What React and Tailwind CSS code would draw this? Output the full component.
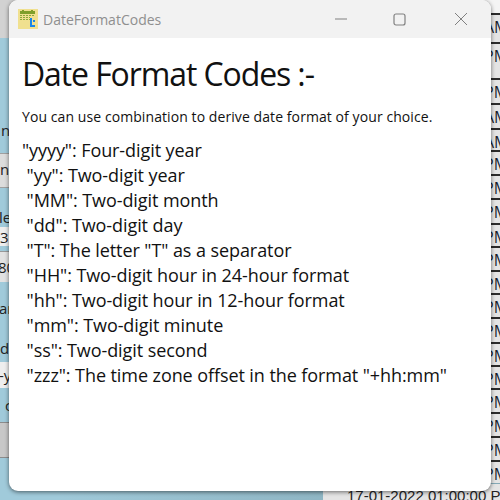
const rows = [
  ["h-[29px]", "AM"], ["h-[36px]", "PM"], ["h-[25px]", "PM"], ["h-[25px]", "AM"],
  ["h-[22px]", "AM"], ["h-[24px]", "PM"], ["h-[24px]", "PM"], ["h-[25px]", "PM"],
  ["h-[23px]", "PM"], ["h-[24px]", "PM"], ["h-[23px]", "PM"], ["h-[24px]", "PM"],
  ["h-[25px]", "PM"], ["h-[23px]", "PM"], ["h-[23px]", "PM"], ["h-[24px]", "PM"],
  ["h-[24px]", "PM"], ["h-[24px]", "PM"], ["h-[23px]", "PM"],
];
const codes = [
  '"yyyy": Four-digit year',
  ' "yy": Two-digit year',
  ' "MM": Two-digit month',
  ' "dd": Two-digit day',
  ' "T": The letter "T" as a separator',
  ' "HH": Two-digit hour in 24-hour format',
  ' "hh": Two-digit hour in 12-hour format',
  ' "mm": Two-digit minute',
  ' "ss": Two-digit second',
  ' "zzz": The time zone offset in the format "+hh:mm"',
];
export default function App() {
  return (
    <div className="relative w-[500px] h-[500px] overflow-hidden bg-gradient-to-r from-[#a3cddd] to-[#84a9b6] font-['Open_Sans',sans-serif]">
      <div className="flex h-full w-[60px] flex-col bg-[#a0cada] text-[15px] leading-[20px] text-[#222222]">
        <div className="h-[38px] bg-[#d2d2d2]" />
        <div className="flex h-[115px] items-end pb-[13px] pl-[1px]">n</div>
        <div className="flex h-[35px] items-center border-y border-[#a0a0a0] bg-[#dcdcdc]"><span className="mt-[-3px]">n1</span></div>
        <div className="flex h-[39px] items-end"><span className="ml-[-1px]">le</span></div>
        <div className="flex h-[19px] items-center bg-[#eeeeee]">31</div>
        <div className="h-[6px] border-b border-[#999999]" />
        <div className="flex h-[30px] items-center bg-[#e2e2e2]"><span className="ml-[-2px]">80</span></div>
        <div className="flex h-[80px] flex-col justify-between pb-[4px] pt-[16px]"><span className="ml-[-1px]">an</span><span>d</span></div>
        <div className="flex h-[26px] items-center bg-[#eeeeee]"><span className="ml-[-1px]">-y</span></div>
        <div className="flex h-[34px] items-center pl-[5px]">c</div>
        <div className="h-[36px] border-y border-[#8c8c8c] bg-[#c8c8c8]" />
      </div>
      <div className="absolute right-0 top-0 flex h-[13px] w-[20px] bg-[#f4f4f4]" />
      <div className="absolute right-0 top-[13px] flex w-[20px] flex-col bg-[#e4e4e4] text-[16px] leading-[24px] text-[#1a1f30]">
        {rows.map(([h, t], i) => (
          <div key={i} className={`${h} overflow-hidden border-t-2 border-[#2a2a2a] whitespace-nowrap`}>
            <span className="ml-[4px]">{t}</span>
          </div>
        ))}
      </div>
      <div className="absolute left-[323px] top-[484px] flex h-[24px] w-[177px] items-center overflow-hidden bg-[#e4e4e4] pl-[24px] font-['Liberation_Sans',sans-serif] text-[15px] whitespace-nowrap text-[#222222]">
        <div className="absolute bottom-0 left-[10px] h-[8px] w-[7px] bg-[#c4c4c4]" />
        17-01-2022 01:00:00 PM
      </div>
      <div className="absolute left-[9px] top-0 h-[491px] w-[482px] overflow-hidden rounded-[9px] bg-white shadow-[0_1px_4px_rgba(0,0,0,0.55)]">
        <div className="flex h-[38px] items-center bg-[#f2f2f2]">
          <svg className="ml-[9px]" width="20" height="20" viewBox="0 0 20 20">
            <rect width="20" height="20" fill="#f0e08f" />
            <rect x="2" y="2" width="15" height="3" fill="#7f9f2a" />
            <rect x="4" y="1" width="2" height="2" fill="#7f9f2a" />
            <rect x="13" y="1" width="2" height="2" fill="#7f9f2a" />
            <path d="M2 6.5h15M2 8.5h10M2 10.5h10" stroke="#8aa83a" strokeWidth="1" strokeDasharray="2 1" />
            <path d="M12 9h2v7h3v2h-5z" fill="#1a86e8" />
            <rect x="15" y="11" width="2" height="2" fill="#1a86e8" />
          </svg>
          <span className="ml-[5px] text-[14px] text-[#8f8f8f]">DateFormatCodes</span>
          <div className="ml-auto flex items-center text-[#808080]">
            <svg className="mr-[46px]" width="12" height="12" viewBox="0 0 12 12"><path d="M0 6h12" stroke="currentColor" strokeWidth="1" /></svg>
            <svg className="mr-[48px]" width="13" height="13" viewBox="0 0 13 13"><rect x="1" y="1" width="11" height="11" rx="2" fill="none" stroke="currentColor" strokeWidth="1.2" /></svg>
            <svg className="mr-[23px]" width="14" height="14" viewBox="0 0 14 14"><path d="M1 1l12 12M13 1L1 13" stroke="currentColor" strokeWidth="1" /></svg>
          </div>
        </div>
        <div className="px-[13px] text-[#111111]">
          <h1 className="mt-[16px] text-[32px] leading-[40px] tracking-[-1.1px]">Date Format Codes :-</h1>
          <p className="mt-[13px] text-[14px] leading-[20px] tracking-[0.08px]">You can use combination to derive date format of your choice.</p>
          <div className="mt-[11px] text-[18px] leading-[25px] tracking-[-0.08px] whitespace-pre">
            {codes.map((c) => <div key={c}>{c}</div>)}
          </div>
        </div>
      </div>
    </div>
  );
}
